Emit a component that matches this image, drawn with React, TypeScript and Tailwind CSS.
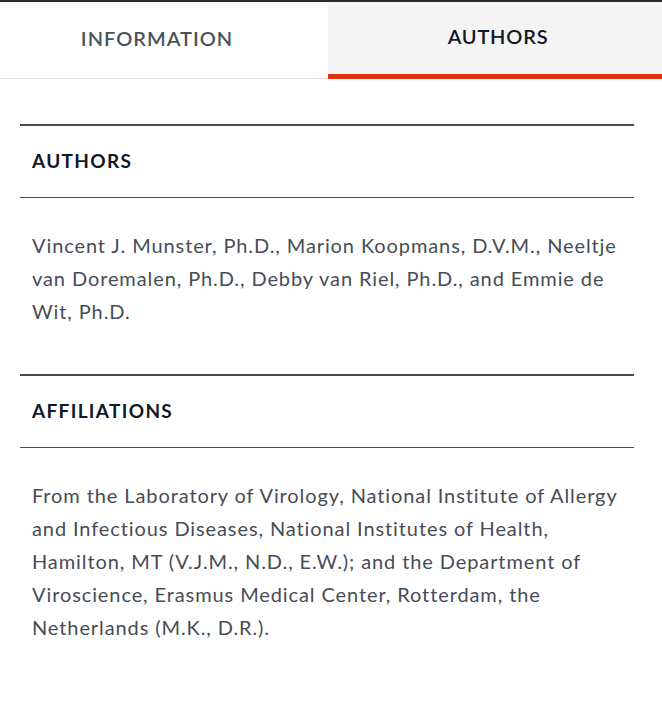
import { useState } from 'react';

const sections = [
  {
    title: 'AUTHORS',
    body: 'Vincent J. Munster, Ph.D., Marion Koopmans, D.V.M., Neeltje van Doremalen, Ph.D., Debby van Riel, Ph.D., and Emmie de Wit, Ph.D.',
  },
  {
    title: 'AFFILIATIONS',
    body: 'From the Laboratory of Virology, National Institute of Allergy and Infectious Diseases, National Institutes of Health, Hamilton, MT (V.J.M., N.D., E.W.); and the Department of Viroscience, Erasmus Medical Center, Rotterdam, the Netherlands (M.K., D.R.).',
  },
];

export default function App() {
  const [tab, setTab] = useState<'info' | 'authors'>('authors');

  return (
    <div className="min-h-[708px] bg-white border-t-2 border-[#2b2b2b] font-['Lato',sans-serif]">
      <div className="flex h-[77px]">
        <button
          onClick={() => setTab('info')}
          className={`w-[328px] flex items-center justify-center pb-1 pr-[14px] text-[20px] font-semibold tracking-[0.05em] ${
            tab === 'info' ? 'bg-[#f4f4f4] border-b-[5px] border-[#e0300e] text-[#111827]' : 'bg-white border-b border-[#e2e2e2] text-[#4b525c]'
          }`}
        >
          INFORMATION
        </button>
        <button
          onClick={() => setTab('authors')}
          className={`flex-1 flex items-center justify-center pb-1 pl-[6px] text-[20px] font-semibold tracking-[0.04em] ${
            tab === 'authors' ? 'bg-[#f4f4f4] border-b-[5px] border-[#e0300e] text-[#111827]' : 'bg-white border-b border-[#e2e2e2] text-[#4b525c]'
          }`}
        >
          AUTHORS
        </button>
      </div>

      <div className="pl-5 pr-[28px] pt-[45px]">
        {sections.map((s) => (
          <div key={s.title} className="mb-[46px]">
            <div className="border-t-2 border-[#4a4a4a] border-b h-[74px] flex items-center px-3">
              <h2 className="text-[19px] font-bold tracking-[0.07em] text-[#111827]">{s.title}</h2>
            </div>
            <p className="pl-3 pt-[31px] text-[20px] leading-[33px] tracking-[0.9px] text-[#474c56]">{s.body}</p>
          </div>
        ))}
      </div>
    </div>
  );
}
